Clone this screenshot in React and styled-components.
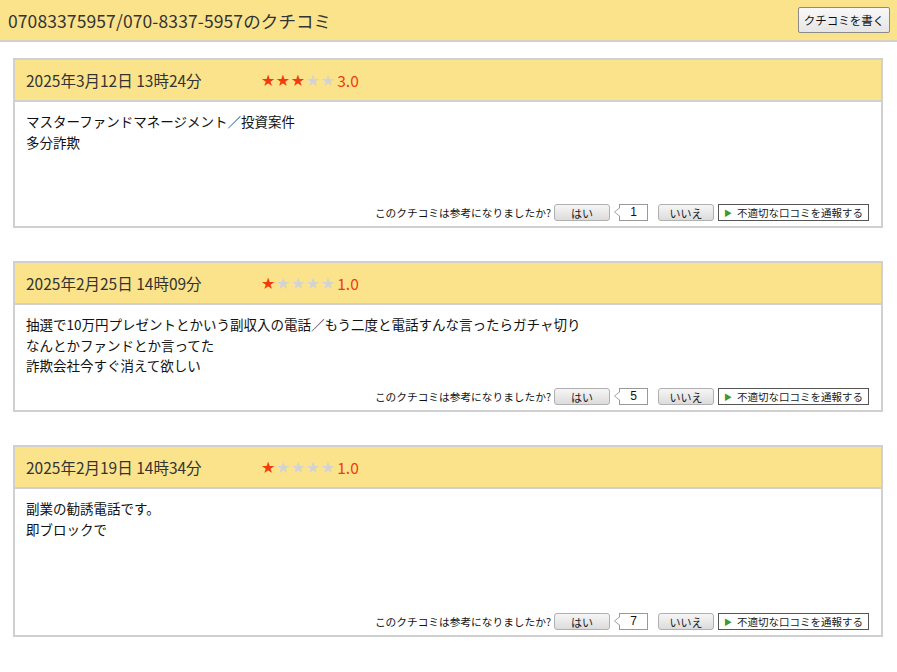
import React from "react"
import styled, { createGlobalStyle } from "styled-components"

const GlobalStyle = createGlobalStyle`
    body {
        margin: 0;
        background: #fff;
        font-family: "Noto Sans CJK JP", "Noto Sans", sans-serif;
        color: #222;
    }
`

const reviews = [
    {
        date: "2025年3月12日 13時24分",
        rating: 3,
        lines: ["マスターファンドマネージメント／投資案件", "多分詐欺"],
        count: 1,
        bodyHeight: 124,
    },
    {
        date: "2025年2月25日 14時09分",
        rating: 1,
        lines: [
            "抽選で10万円プレゼントとかいう副収入の電話／もう二度と電話すんな言ったらガチャ切り",
            "なんとかファンドとか言ってた",
            "詐欺会社今すぐ消えて欲しい",
        ],
        count: 5,
        bodyHeight: 105,
    },
    {
        date: "2025年2月19日 14時34分",
        rating: 1,
        lines: ["副業の勧誘電話です。", "即ブロックで"],
        count: 7,
        bodyHeight: 146,
    },
]

export default function App(){
    return(
        <>
            <GlobalStyle/>
            <TopBar>
                <PageTitle>07083375957/070-8337-5957のクチコミ</PageTitle>
                <WriteButton>クチコミを書く</WriteButton>
            </TopBar>
            <List>
                {reviews.map((r, i) => (
                    <Card key={i}>
                        <CardHead>
                            <DateText>{r.date}</DateText>
                            <Stars>
                                {[1, 2, 3, 4, 5].map(n => (
                                    <Star key={n} $on={n <= r.rating}>★</Star>
                                ))}
                            </Stars>
                            <Score>{r.rating.toFixed(1)}</Score>
                        </CardHead>
                        <CardBody $h={r.bodyHeight}>
                            <Comment>
                                {r.lines.map((l, j) => <div key={j}>{l}</div>)}
                            </Comment>
                            <Footer>
                                <Question>このクチコミは参考になりましたか?</Question>
                                <VoteButton>はい</VoteButton>
                                <Count>{r.count}</Count>
                                <VoteButton>いいえ</VoteButton>
                                <Report><Arrow>▶</Arrow>不適切な口コミを通報する</Report>
                            </Footer>
                        </CardBody>
                    </Card>
                ))}
            </List>
        </>
    )
}

const TopBar = styled.div`
    display: flex;
    justify-content: space-between;
    align-items: center;
    height: 42px;
    box-sizing: border-box;
    padding: 0 7px 0 8px;
    background-color: #fbe38b;
    border-bottom: 2px solid #d4d0c8;
`
const PageTitle = styled.h1`
    margin: 0;
    font-size: 17.5px;
    font-weight: 400;
    color: #333;
    letter-spacing: 0.1px;
`
const WriteButton = styled.button`
    font-family: "Noto Sans CJK JP", sans-serif;
    font-size: 11.5px;
    color: #111;
    width: 92px;
    height: 26px;
    padding: 0;
    background: linear-gradient(#f8f8f8, #e6e6e6);
    border: 1px solid #8a8a8a;
    border-radius: 2px;
`
const List = styled.div`
    display: flex;
    flex-direction: column;
    gap: 33px;
    padding: 16px 14px 0 13px;
`
const Card = styled.div`
    border: 2px solid #d0d0d0;
    background: #fff;
`
const CardHead = styled.div`
    display: flex;
    align-items: center;
    height: 40px;
    padding: 0 11px;
    background-color: #fbe38b;
    border-bottom: 2px solid #d0d0d0;
`
const DateText = styled.span`
    font-size: 15.5px;
    color: #333;
    width: 235px;
`
const Stars = styled.span`
    display: flex;
    font-family: "DejaVu Sans", sans-serif;
    font-size: 16px;
    letter-spacing: 0.5px;
`
const Star = styled.span`
    color: ${p => p.$on ? "#f03c0a" : "#d3d3d3"};
`
const Score = styled.span`
    margin-left: 2px;
    font-size: 15.5px;
    color: #f03c0a;
`
const CardBody = styled.div`
    display: flex;
    flex-direction: column;
    justify-content: space-between;
    box-sizing: border-box;
    min-height: ${p => p.$h}px;
    padding: 9px 12px 5px 11px;
`
const Comment = styled.div`
    font-size: 13.5px;
    line-height: 20.5px;
    color: #111;
`
const Footer = styled.div`
    display: flex;
    justify-content: flex-end;
    align-items: center;
    gap: 3px;
    font-size: 10.7px;
    color: #111;
`
const Question = styled.span`
    margin-right: 0;
`
const VoteButton = styled.button`
    font-family: "Noto Sans CJK JP", sans-serif;
    font-size: 11px;
    color: #222;
    width: 56px;
    height: 17px;
    padding: 0;
    line-height: 14px;
    background: linear-gradient(#f6f6f6, #dcdcdc);
    border: 1px solid #b0b0b0;
    border-radius: 3px;
`
const Count = styled.span`
    position: relative;
    box-sizing: border-box;
    width: 29px;
    height: 17px;
    margin: 0 7px 0 6px;
    border: 1px solid #999;
    background: #fff;
    font-family: "Liberation Sans", sans-serif;
    font-size: 12px;
    line-height: 15px;
    text-align: center;
    &::before {
        content: "";
        position: absolute;
        left: -6px;
        top: 2px;
        border-style: solid;
        border-width: 5px 6px 5px 0;
        border-color: transparent #999 transparent transparent;
    }
    &::after {
        content: "";
        position: absolute;
        left: -5px;
        top: 3px;
        border-style: solid;
        border-width: 4px 5px 4px 0;
        border-color: transparent #fff transparent transparent;
    }
`
const Report = styled.span`
    display: flex;
    align-items: center;
    box-sizing: border-box;
    height: 17px;
    margin-left: 1px;
    padding: 0 5px 0 5px;
    border: 1px solid #555;
    background: #fff;
    font-size: 10.5px;
    color: #222;
`
const Arrow = styled.span`
    color: #3a9a2a;
    font-size: 8px;
    margin-right: 5px;
`
